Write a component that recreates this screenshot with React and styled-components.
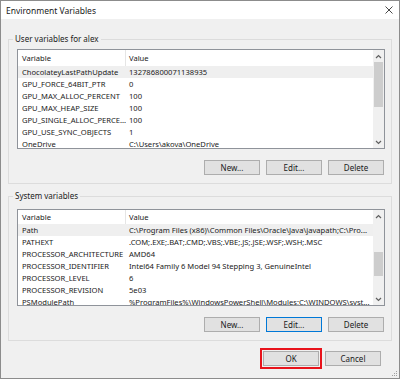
import React from 'react'
import styled, { createGlobalStyle } from 'styled-components'

const GlobalStyle = createGlobalStyle`
  body {
    margin: 0;
    font-family: "Noto Sans", "Open Sans", sans-serif;
    color: #1a1a1a;
  }
`

const Window = styled.div`
  width: 400px;
  height: 379px;
  box-sizing: border-box;
  border: 1px solid #8c8c8c;
  background: #f0f0f0;
  display: flex;
  flex-direction: column;
  position: relative;
`

const TitleBar = styled.div`
  height: 18px;
  background: #fff;
  display: flex;
  align-items: center;
  justify-content: space-between;
  padding: 0 6px 0 5px;
  font-size: 8.5px;
`

const Body = styled.div`
  padding: 20px 7px 0 7px;
  display: flex;
  flex-direction: column;
`

const Group = styled.div`
  position: relative;
  border: 1px solid #dcdcdc;
  padding: ${p => p.top}px 6px 8px 8px;
  margin-bottom: ${p => p.gap || 0}px;
  display: flex;
  flex-direction: column;
`

const GroupLabel = styled.span`
  position: absolute;
  top: -7px;
  left: 4px;
  padding: 0 2px;
  background: #f0f0f0;
  font-size: 8px;
  line-height: 12px;
`

const List = styled.div`
  height: ${p => p.h}px;
  box-sizing: border-box;
  border: 1px solid #8f939a;
  background: #fff;
  display: flex;
  overflow: hidden;
`

const Rows = styled.div`
  flex: 1;
  min-width: 0;
  display: flex;
  flex-direction: column;
`

const Row = styled.div`
  display: grid;
  grid-template-columns: 108px 1fr;
  height: ${p => p.h || 12}px;
  flex-shrink: 0;
  align-items: center;
  font-size: 7.6px;
  white-space: nowrap;
  background: ${p => (p.selected ? '#efefef' : 'transparent')};
`

const Cell = styled.div`
  padding-left: ${p => (p.first ? 4 : 3)}px;
  overflow: hidden;
  height: 100%;
  display: flex;
  align-items: center;
  border-right: ${p => (p.head && p.first ? '1px solid #e5e5e5' : 'none')};
`

const ScrollBar = styled.div`
  width: 11px;
  flex-shrink: 0;
  background: #f0f0f0;
  display: flex;
  flex-direction: column;
  align-items: center;
`

const Arrow = styled.div`
  height: 12px;
  display: flex;
  align-items: center;
  justify-content: center;
`

const Track = styled.div`
  flex: 1;
  width: 9px;
  display: flex;
  flex-direction: column;
`

const Thumb = styled.div`
  background: #cdcdcd;
  margin-top: ${p => p.offset}px;
  height: ${p => p.size}px;
`

const ButtonRow = styled.div`
  display: flex;
  justify-content: flex-end;
  gap: 6px;
  margin-top: 11px;
  padding-right: 1px;
`

const Button = styled.button`
  width: 56px;
  height: 15px;
  box-sizing: border-box;
  padding: 0;
  font-family: inherit;
  font-size: 8px;
  color: #1a1a1a;
  background: #e1e1e1;
  border: 1px solid ${p => (p.focused ? '#0078d7' : '#adadad')};
  outline: ${p => (p.marked ? '2px solid #e8131b' : 'none')};
  outline-offset: 1px;
`

const Footer = styled.div`
  display: flex;
  justify-content: flex-end;
  gap: 6px;
  padding: 10px 18px 0 0;
`

const Grip = styled.svg`
  position: absolute;
  right: 1px;
  bottom: 1px;
`

const userVars = [
  ['ChocolateyLastPathUpdate', '132786800071138935'],
  ['GPU_FORCE_64BIT_PTR', '0'],
  ['GPU_MAX_ALLOC_PERCENT', '100'],
  ['GPU_MAX_HEAP_SIZE', '100'],
  ['GPU_SINGLE_ALLOC_PERCE...', '100'],
  ['GPU_USE_SYNC_OBJECTS', '1'],
  ['OneDrive', 'C:\\Users\\akova\\OneDrive'],
]

const systemVars = [
  ['Path', 'C:\\Program Files (x86)\\Common Files\\Oracle\\Java\\javapath;C:\\Pro...'],
  ['PATHEXT', '.COM;.EXE;.BAT;.CMD;.VBS;.VBE;.JS;.JSE;.WSF;.WSH;.MSC'],
  ['PROCESSOR_ARCHITECTURE', 'AMD64'],
  ['PROCESSOR_IDENTIFIER', 'Intel64 Family 6 Model 94 Stepping 3, GenuineIntel'],
  ['PROCESSOR_LEVEL', '6'],
  ['PROCESSOR_REVISION', '5e03'],
  ['PSModulePath', '%ProgramFiles%\\WindowsPowerShell\\Modules;C:\\WINDOWS\\syst...'],
]

const Chevron = ({ down }) => (
  <svg width="7" height="5" viewBox="0 0 7 5">
    <path
      d={down ? 'M1 1 L3.5 3.5 L6 1' : 'M1 4 L3.5 1.5 L6 4'}
      fill="none"
      stroke="#606060"
      strokeWidth="1.2"
    />
  </svg>
)

const VarList = ({ data, height, headH, thumb }) => (
  <List h={height}>
    <Rows>
      <Row h={headH}>
        <Cell first head>Variable</Cell>
        <Cell head>Value</Cell>
      </Row>
      {data.map((item, index) => (
        <Row key={index} selected={index === 0}>
          <Cell first>{item[0]}</Cell>
          <Cell>{item[1]}</Cell>
        </Row>
      ))}
    </Rows>
    <ScrollBar>
      <Arrow><Chevron /></Arrow>
      <Track>
        <Thumb offset={thumb[0]} size={thumb[1]} />
      </Track>
      <Arrow><Chevron down /></Arrow>
    </ScrollBar>
  </List>
)

const App = () => (
  <>
    <GlobalStyle />
    <Window>
      <TitleBar>
        <span>Environment Variables</span>
        <svg width="8" height="8" viewBox="0 0 8 8">
          <path d="M0.5 0.5 L7.5 7.5 M7.5 0.5 L0.5 7.5" stroke="#333" strokeWidth="0.9" />
        </svg>
      </TitleBar>
      <Body>
        <Group top={9} gap={12}>
          <GroupLabel>User variables for alex</GroupLabel>
          <VarList data={userVars} height={100} headH={16} thumb={[0, 45]} />
          <ButtonRow>
            <Button>New...</Button>
            <Button>Edit...</Button>
            <Button>Delete</Button>
          </ButtonRow>
        </Group>
        <Group top={12}>
          <GroupLabel>System variables</GroupLabel>
          <VarList data={systemVars} height={97} headH={14} thumb={[30, 24]} />
          <ButtonRow>
            <Button>New...</Button>
            <Button focused>Edit...</Button>
            <Button>Delete</Button>
          </ButtonRow>
        </Group>
      </Body>
      <Footer>
        <Button marked>OK</Button>
        <Button>Cancel</Button>
      </Footer>
      <Grip width="6" height="6" viewBox="0 0 6 6">
        <g fill="#a0a0a0">
          <rect x="4" y="0" width="1" height="1" />
          <rect x="2" y="2" width="1" height="1" />
          <rect x="4" y="2" width="1" height="1" />
          <rect x="0" y="4" width="1" height="1" />
          <rect x="2" y="4" width="1" height="1" />
          <rect x="4" y="4" width="1" height="1" />
        </g>
      </Grip>
    </Window>
  </>
)

export default App
